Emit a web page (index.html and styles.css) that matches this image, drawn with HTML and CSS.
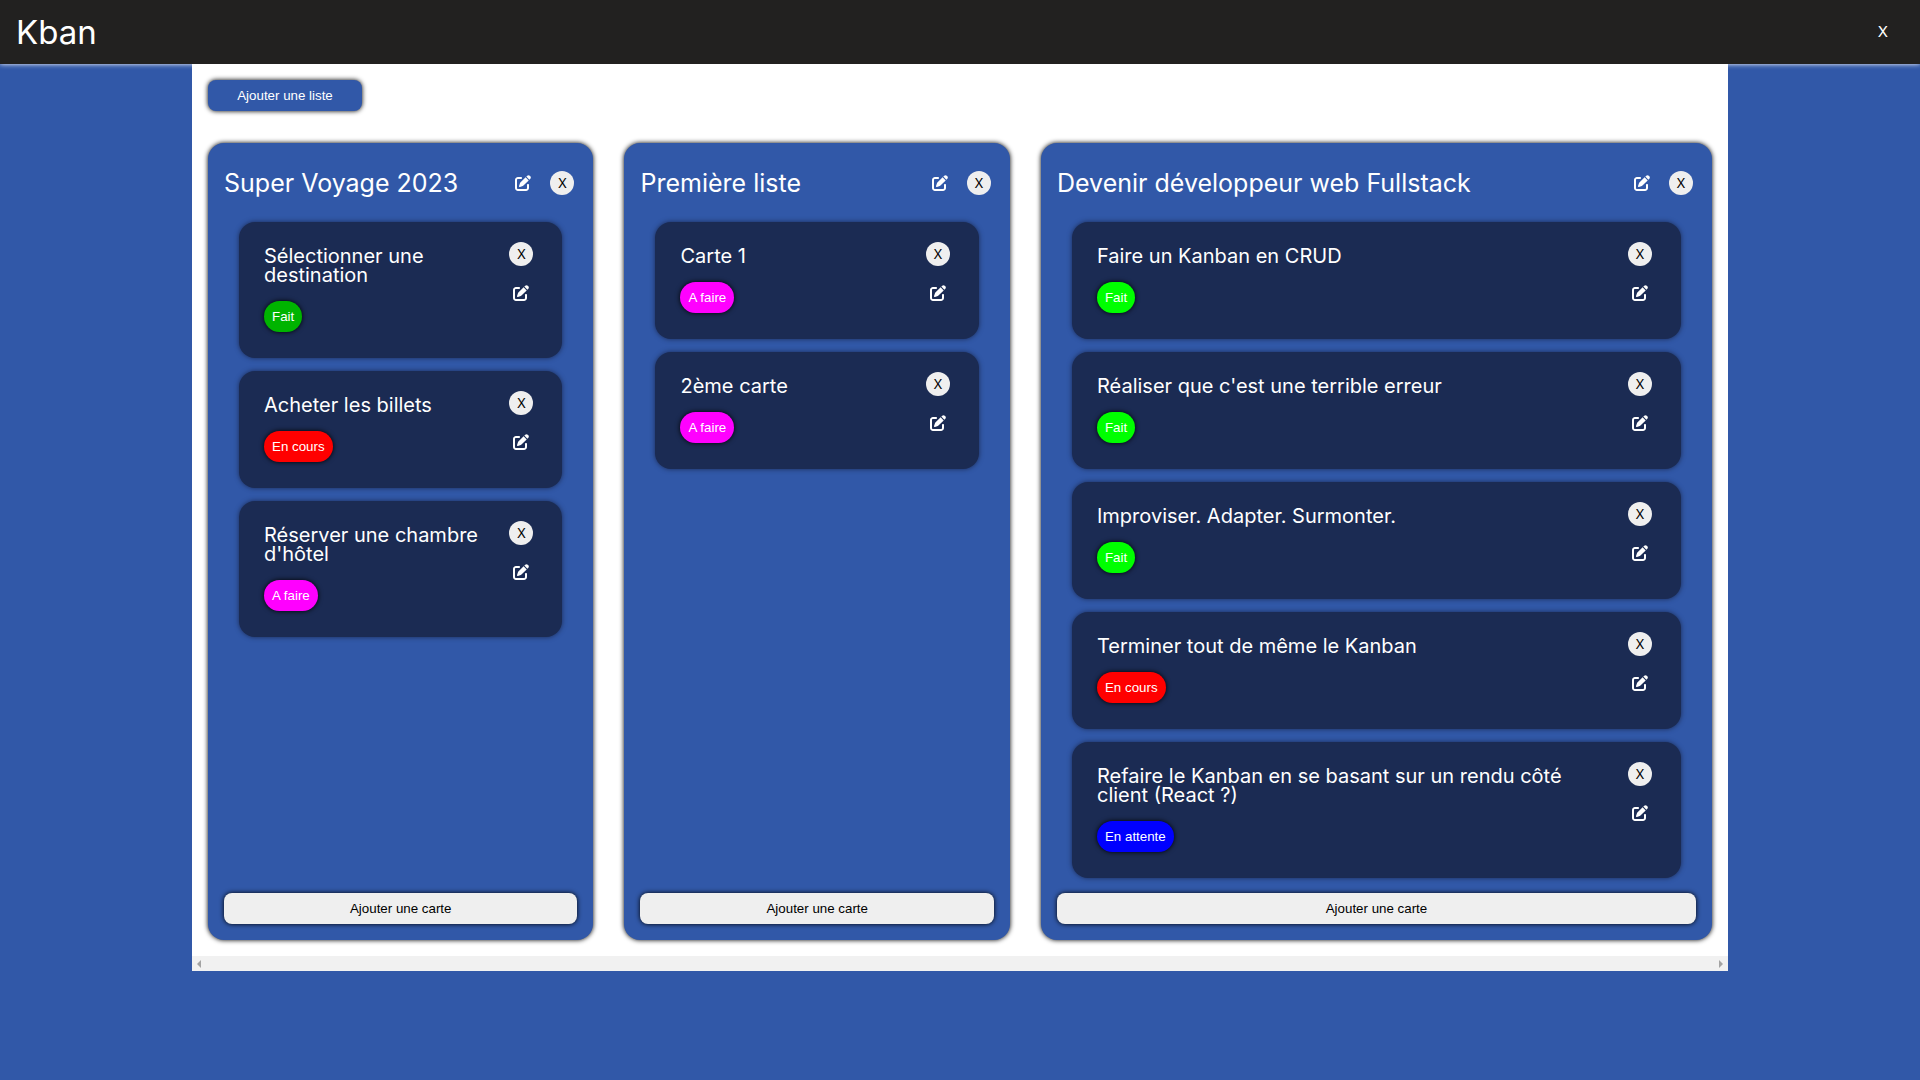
FILE: index.html
```html
<!DOCTYPE html>
<html lang="fr">
<head>
  <meta charset="utf-8">
  <meta name="viewport" content="width=device-width, initial-scale=1">
  <title>Kban</title>
  <link rel="stylesheet" href="styles.css">
</head>
<body>
  <svg class="sprite" aria-hidden="true">
    <symbol id="edit" viewBox="0 0 512 512">
      <path d="M471.6 21.7c-21.9-21.9-57.3-21.9-79.2 0L362.3 51.7l97.9 97.9 30.1-30.1c21.9-21.9 21.9-57.3 0-79.2L471.6 21.7zm-299.2 220c-6.1 6.1-10.8 13.6-13.5 21.9l-29.6 88.8c-2.9 8.6-.6 18.1 5.8 24.6s15.9 8.7 24.6 5.8l88.8-29.6c8.2-2.7 15.7-7.4 21.9-13.5L437.7 172.3 339.7 74.3 172.4 241.7zM96 64C43 64 0 107 0 160V416c0 53 43 96 96 96H352c53 0 96-43 96-96V320c0-17.7-14.3-32-32-32s-32 14.3-32 32v96c0 17.7-14.3 32-32 32H96c-17.7 0-32-14.3-32-32V160c0-17.7 14.3-32 32-32h96c17.7 0 32-14.3 32-32s-14.3-32-32-32H96z"/>
    </symbol>
  </svg>

  <header class="topbar">
    <h1 class="brand">Kban</h1>
    <button class="topbar-close" type="button">X</button>
  </header>

  <main class="board">
    <div class="board-body">
      <button class="btn btn-list" type="button">Ajouter une liste</button>

      <div class="lists">
        <section class="list">
          <header class="list-head">
            <h2 class="list-title">Super Voyage 2023</h2>
            <button class="edit" type="button" aria-label="Modifier"><svg class="icon"><use href="#edit"/></svg></button>
            <button class="close" type="button">X</button>
          </header>
          <div class="cards">
            <article class="card">
              <div class="card-main">
                <h3 class="card-title">Sélectionner une destination</h3>
                <button class="tag tag-green" type="button">Fait</button>
              </div>
              <div class="card-tools">
                <button class="close" type="button">X</button>
                <button class="edit" type="button" aria-label="Modifier"><svg class="icon"><use href="#edit"/></svg></button>
              </div>
            </article>
            <article class="card">
              <div class="card-main">
                <h3 class="card-title">Acheter les billets</h3>
                <button class="tag tag-red" type="button">En cours</button>
              </div>
              <div class="card-tools">
                <button class="close" type="button">X</button>
                <button class="edit" type="button" aria-label="Modifier"><svg class="icon"><use href="#edit"/></svg></button>
              </div>
            </article>
            <article class="card">
              <div class="card-main">
                <h3 class="card-title">Réserver une chambre d'hôtel</h3>
                <button class="tag tag-pink" type="button">A faire</button>
              </div>
              <div class="card-tools">
                <button class="close" type="button">X</button>
                <button class="edit" type="button" aria-label="Modifier"><svg class="icon"><use href="#edit"/></svg></button>
              </div>
            </article>
          </div>
          <button class="btn btn-card" type="button">Ajouter une carte</button>
        </section>

        <section class="list">
          <header class="list-head">
            <h2 class="list-title">Première liste</h2>
            <button class="edit" type="button" aria-label="Modifier"><svg class="icon"><use href="#edit"/></svg></button>
            <button class="close" type="button">X</button>
          </header>
          <div class="cards">
            <article class="card">
              <div class="card-main">
                <h3 class="card-title">Carte 1</h3>
                <button class="tag tag-pink" type="button">A faire</button>
              </div>
              <div class="card-tools">
                <button class="close" type="button">X</button>
                <button class="edit" type="button" aria-label="Modifier"><svg class="icon"><use href="#edit"/></svg></button>
              </div>
            </article>
            <article class="card">
              <div class="card-main">
                <h3 class="card-title">2ème carte</h3>
                <button class="tag tag-pink" type="button">A faire</button>
              </div>
              <div class="card-tools">
                <button class="close" type="button">X</button>
                <button class="edit" type="button" aria-label="Modifier"><svg class="icon"><use href="#edit"/></svg></button>
              </div>
            </article>
          </div>
          <button class="btn btn-card" type="button">Ajouter une carte</button>
        </section>

        <section class="list">
          <header class="list-head">
            <h2 class="list-title">Devenir développeur web Fullstack</h2>
            <button class="edit" type="button" aria-label="Modifier"><svg class="icon"><use href="#edit"/></svg></button>
            <button class="close" type="button">X</button>
          </header>
          <div class="cards">
            <article class="card">
              <div class="card-main">
                <h3 class="card-title">Faire un Kanban en CRUD</h3>
                <button class="tag tag-lime" type="button">Fait</button>
              </div>
              <div class="card-tools">
                <button class="close" type="button">X</button>
                <button class="edit" type="button" aria-label="Modifier"><svg class="icon"><use href="#edit"/></svg></button>
              </div>
            </article>
            <article class="card">
              <div class="card-main">
                <h3 class="card-title">Réaliser que c'est une terrible erreur</h3>
                <button class="tag tag-lime" type="button">Fait</button>
              </div>
              <div class="card-tools">
                <button class="close" type="button">X</button>
                <button class="edit" type="button" aria-label="Modifier"><svg class="icon"><use href="#edit"/></svg></button>
              </div>
            </article>
            <article class="card">
              <div class="card-main">
                <h3 class="card-title">Improviser. Adapter. Surmonter.</h3>
                <button class="tag tag-lime" type="button">Fait</button>
              </div>
              <div class="card-tools">
                <button class="close" type="button">X</button>
                <button class="edit" type="button" aria-label="Modifier"><svg class="icon"><use href="#edit"/></svg></button>
              </div>
            </article>
            <article class="card">
              <div class="card-main">
                <h3 class="card-title">Terminer tout de même le Kanban</h3>
                <button class="tag tag-red" type="button">En cours</button>
              </div>
              <div class="card-tools">
                <button class="close" type="button">X</button>
                <button class="edit" type="button" aria-label="Modifier"><svg class="icon"><use href="#edit"/></svg></button>
              </div>
            </article>
            <article class="card">
              <div class="card-main">
                <h3 class="card-title">Refaire le Kanban en se basant sur un rendu côté client (React ?)</h3>
                <button class="tag tag-blue" type="button">En attente</button>
              </div>
              <div class="card-tools">
                <button class="close" type="button">X</button>
                <button class="edit" type="button" aria-label="Modifier"><svg class="icon"><use href="#edit"/></svg></button>
              </div>
            </article>
          </div>
          <button class="btn btn-card" type="button">Ajouter une carte</button>
        </section>
      </div>
    </div>

    <div class="scrollbar" aria-hidden="true">
      <svg class="arrow" viewBox="0 0 4 8"><path d="M4 0v8L0 4z"/></svg>
      <svg class="arrow" viewBox="0 0 4 8"><path d="M0 0v8l4-4z"/></svg>
    </div>
  </main>
</body>
</html>
```

FILE: styles.css
```css
* {
  box-sizing: border-box;
  margin: 0;
}

body {
  min-height: 100vh;
  background: #3158a8;
  color: #fff;
  font-family: Inter, sans-serif;
}

button {
  border: 0;
  padding: 0;
  font-family: "Liberation Sans", Arial, sans-serif;
  line-height: 15px;
  cursor: pointer;
}

.sprite {
  display: none;
}

.topbar {
  display: flex;
  align-items: center;
  justify-content: space-between;
  height: 64px;
  padding: 0 32px 0 16px;
  background: #222120;
  box-shadow: 0 0 5px #fff;
}

.brand {
  font-size: 33px;
  font-weight: 400;
}

.topbar-close {
  background: none;
  color: #fff;
  font: 15px/24px Inter, sans-serif;
}

.board {
  width: 80%;
  margin: 0 auto;
  background: #fff;
}

.board-body {
  padding: 16px;
}

.btn {
  padding: 8px;
  border-radius: 8px;
}

.btn-list {
  display: block;
  width: 154px;
  margin-bottom: 32px;
  background: #3158a8;
  color: #fff;
  box-shadow: 0 0 5px #000;
}

.btn-card {
  margin-top: auto;
  background: #efefef;
  color: #000;
  box-shadow: 0 0 5px #000;
}

.lists {
  display: grid;
  grid-template-columns: 27fr 27fr 47fr;
  gap: 31px;
}

.list {
  display: flex;
  flex-direction: column;
  padding: 16px;
  border-radius: 16px;
  background: #3158a8;
  box-shadow: 0 0 5px #000;
}

.list-head {
  display: flex;
  align-items: center;
  height: 48px;
  margin-bottom: 15px;
  padding-right: 3px;
}

.list-title {
  flex: 1;
  font-size: 25px;
  font-weight: 400;
  line-height: 32px;
}

.list-head .edit {
  margin-right: 18px;
}

.cards {
  display: flex;
  flex-direction: column;
  gap: 13px;
  padding: 0 15px 15px;
}

.card {
  display: flex;
  justify-content: space-between;
  gap: 16px;
  padding: 25px 29px 26px 25px;
  border-radius: 16px;
  background: #1b2b53;
  box-shadow: 0 0 5px #1b2b53;
}

.card-title {
  margin-bottom: 16px;
  font-size: 20px;
  font-weight: 400;
  line-height: 19px;
}

.card-tools {
  display: flex;
  flex-direction: column;
  align-items: center;
  gap: 15px;
  margin: -5px 0;
}

.close {
  flex: none;
  width: 24px;
  height: 24px;
  border-radius: 50%;
  background: #efefef;
  color: #000;
  font: 13px/24px Inter, sans-serif;
}

.edit {
  display: grid;
  place-items: center;
  flex: none;
  width: 18px;
  height: 24px;
  background: none;
  color: #fff;
}

.icon {
  width: 16px;
  height: 16px;
  fill: currentColor;
}

.tag {
  display: block;
  padding: 8px;
  border-radius: 16px;
  color: #fff;
  box-shadow: 0 0 5px #000;
}

.tag-green {
  background: #00b400;
}

.tag-lime {
  background: #0f0;
}

.tag-red {
  background: #f00;
}

.tag-pink {
  background: #f0f;
}

.tag-blue {
  background: #00f;
}

.scrollbar {
  display: flex;
  align-items: center;
  justify-content: space-between;
  height: 15px;
  padding: 0 5px;
  background: #f1f1f1;
}

.arrow {
  width: 4px;
  height: 8px;
  fill: #a3a3a3;
}
```
